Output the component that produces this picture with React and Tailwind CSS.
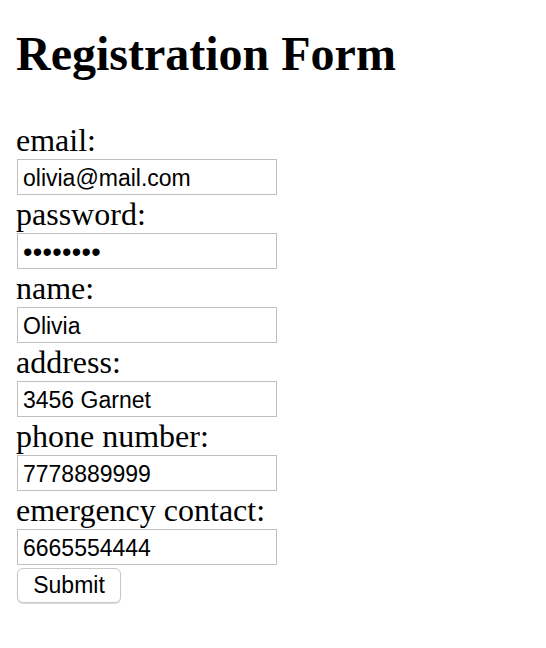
export default function App() {
  const fields = [
    { label: "email:", value: "olivia@mail.com" },
    { label: "password:", value: "••••••••", pw: true },
    { label: "name:", value: "Olivia" },
    { label: "address:", value: "3456 Garnet" },
    { label: "phone number:", value: "7778889999" },
    { label: "emergency contact:", value: "6665554444" },
  ];
  return (
    <div className="min-h-[648px] w-[546px] bg-white text-black pl-[16px] pt-[26px]" style={{ fontFamily: '"Liberation Serif", "Times New Roman", serif' }}>
      <h1 className="text-[48px] font-bold leading-[55px] m-0 whitespace-nowrap">Registration Form</h1>
      <form className="flex flex-col mt-[41px]" onSubmit={(e) => e.preventDefault()}>
        {fields.map((f) => (
          <div key={f.label} className="flex flex-col mb-[1px]">
            <label className="text-[32px] leading-[37px] h-[37px] whitespace-nowrap">{f.label}</label>
            <input
              type="text"
              defaultValue={f.value}
              readOnly
              className={
                f.pw
                  ? "ml-[1px] w-[260px] h-[36px] border border-[#bfbfbf] bg-white pl-[5px] pt-[2px] text-[27px] text-black outline-none tracking-[0.3px]"
                  : "ml-[1px] w-[260px] h-[36px] border border-[#bfbfbf] bg-white pl-[5px] pt-[2px] text-[23px] text-black outline-none"
              }
              style={{ fontFamily: '"Liberation Sans", Arial, sans-serif' }}
            />
          </div>
        ))}
        <div className="mt-[2px]">
          <button
            type="submit"
            className="ml-[1px] w-[104px] h-[35px] rounded-[6px] border border-[#c8c8c8] bg-white text-[23px] text-black shadow-[0_1px_1px_rgba(0,0,0,0.15)] leading-none"
            style={{ fontFamily: '"Liberation Sans", Arial, sans-serif' }}
          >
            Submit
          </button>
        </div>
      </form>
    </div>
  );
}
